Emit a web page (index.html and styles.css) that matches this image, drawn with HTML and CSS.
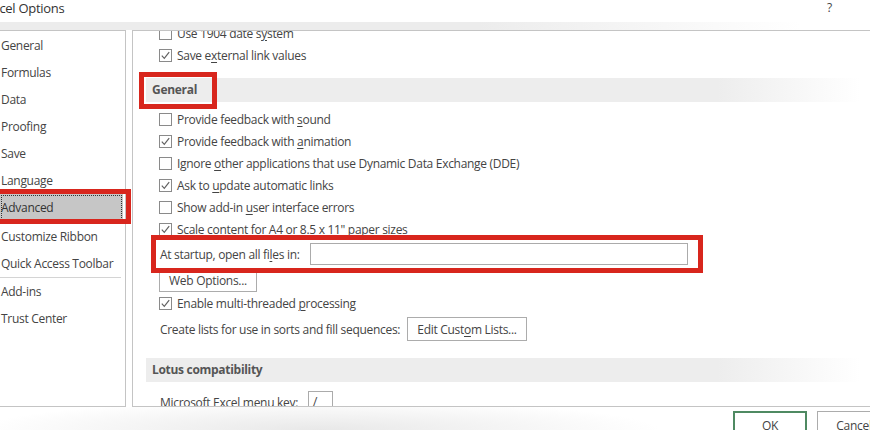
FILE: index.html
```html
<!DOCTYPE html>
<html>
<head>
<meta charset="utf-8">
<link rel="stylesheet" href="styles.css">
</head>
<body>
<div class="dialog">
  <header class="titlebar">
    <span class="title">Excel Options</span>
    <span class="help">?</span>
  </header>
  <div class="shade"></div>
  <div class="main">
    <nav class="nav">
      <div class="nav-item">General</div>
      <div class="nav-item">Formulas</div>
      <div class="nav-item">Data</div>
      <div class="nav-item">Proofing</div>
      <div class="nav-item">Save</div>
      <div class="nav-item">Language</div>
      <div class="nav-item active">Advanced</div>
      <div class="nav-item">Customize Ribbon</div>
      <div class="nav-item">Quick Access Toolbar</div>
      <div class="nav-sep"></div>
      <div class="nav-item">Add-ins</div>
      <div class="nav-item">Trust Center</div>
    </nav>
    <section class="content">
      <div class="inner">
        <div class="row"><svg class="cb" viewBox="0 0 13 13"><rect x="0.5" y="0.5" width="12" height="12"/></svg><span>Use 1904 date s<u>y</u>stem</span></div>
        <div class="row"><svg class="cb" viewBox="0 0 13 13"><rect x="0.5" y="0.5" width="12" height="12"/><path d="M2.8 6.6 L5.3 9.3 L10.2 3.2"/></svg><span>Save e<u>x</u>ternal link values</span></div>

        <div class="band">General</div>

        <div class="row first"><svg class="cb" viewBox="0 0 13 13"><rect x="0.5" y="0.5" width="12" height="12"/></svg><span>Provide feedback with <u>s</u>ound</span></div>
        <div class="row"><svg class="cb" viewBox="0 0 13 13"><rect x="0.5" y="0.5" width="12" height="12"/><path d="M2.8 6.6 L5.3 9.3 L10.2 3.2"/></svg><span>Provide feedback with <u>a</u>nimation</span></div>
        <div class="row"><svg class="cb" viewBox="0 0 13 13"><rect x="0.5" y="0.5" width="12" height="12"/></svg><span>Ignore <u>o</u>ther applications that use Dynamic Data Exchange (DDE)</span></div>
        <div class="row"><svg class="cb" viewBox="0 0 13 13"><rect x="0.5" y="0.5" width="12" height="12"/><path d="M2.8 6.6 L5.3 9.3 L10.2 3.2"/></svg><span>Ask to <u>u</u>pdate automatic links</span></div>
        <div class="row"><svg class="cb" viewBox="0 0 13 13"><rect x="0.5" y="0.5" width="12" height="12"/></svg><span>Show add-in <u>u</u>ser interface errors</span></div>
        <div class="row"><svg class="cb" viewBox="0 0 13 13"><rect x="0.5" y="0.5" width="12" height="12"/><path d="M2.8 6.6 L5.3 9.3 L10.2 3.2"/></svg><span>Scale content for A4 or 8.5 x 11" paper sizes</span></div>

        <div class="row plain startup"><span class="label-startup">At startup, open all fi<u>l</u>es in:</span><span class="field field-startup"></span></div>
        <div class="btn-row"><span class="btn btn-web">Web Options...</span></div>
        <div class="row"><svg class="cb" viewBox="0 0 13 13"><rect x="0.5" y="0.5" width="12" height="12"/><path d="M2.8 6.6 L5.3 9.3 L10.2 3.2"/></svg><span>Enable multi-threaded <u>p</u>rocessing</span></div>
        <div class="row plain lists"><span class="label-lists">Create lists for use in sorts and fill sequences:</span><span class="btn btn-lists">Edit Cust<u>o</u>m Lists...</span></div>

        <div class="band lotus">Lotus compatibility</div>

        <div class="row plain menukey"><span class="label-menu">Microsoft Excel menu key:</span><span class="field field-key">/</span></div>
      </div>
    </section>
  </div>
  <footer class="footer">
    <span class="fbtn ok">OK</span>
    <span class="fbtn cancel">Cancel</span>
  </footer>
</div>
<div class="mark mark-advanced"></div>
<div class="mark mark-general"></div>
<div class="mark mark-startup"></div>
</body>
</html>
```
FILE: styles.css
```css
* { box-sizing: border-box; }
html, body { margin: 0; padding: 0; }
body {
  width: 870px;
  height: 430px;
  overflow: hidden;
  background: #fff;
  font-family: "Open Sans", "Noto Sans", "Liberation Sans", sans-serif;
  font-size: 12px;
  letter-spacing: -0.3px;
  color: #444;
  position: relative;
}
u { text-decoration: underline; text-underline-offset: 2px; text-decoration-thickness: 1px; }

.dialog { width: 870px; height: 430px; display: flex; flex-direction: column; }

.titlebar {
  flex: 0 0 22px;
  display: flex;
  justify-content: space-between;
  align-items: flex-start;
}
.title { margin-left: -14px; line-height: 16px; font-size: 13px; color: #333; }
.help { margin-right: 38px; line-height: 16px; font-size: 12px; color: #444; }

.shade {
  flex: 0 0 8px;
  background: linear-gradient(to right, #ececec 0%, #ececec 55%, #ffffff 92%);
}

.main {
  flex: 0 0 377px;
  min-height: 0;
  overflow: hidden;
  display: flex;
  gap: 6px;
}

.nav {
  width: 126px;
  flex-shrink: 0;
  border-top: 1px solid #c4c4c4;
  border-bottom: 1px solid #c4c4c4;
  border-right: 1px solid #c4c4c4;
  padding-top: 1px;
}
.nav-item {
  height: 27px;
  line-height: 27px;
  padding-left: 1px;
  margin-right: 2px;
  white-space: nowrap;
  color: #444;
}
.nav-item.active {
  background: #c6c6c6;
  color: #333;
  outline: 1px dotted #333;
  outline-offset: -2px;
  margin-bottom: 2px;
}
.nav-sep { height: 1px; background: #d4d4d4; margin-right: 4px; }

.content {
  flex: 1;
  min-height: 0;
  border-top: 1px solid #c4c4c4;
  border-bottom: 1px solid #c4c4c4;
  border-left: 1px solid #c4c4c4;
  overflow: hidden;
}
.inner { margin-top: -9px; }

.row {
  height: 22px;
  display: flex;
  align-items: center;
  padding-left: 26px;
  gap: 5px;
  white-space: nowrap;
}
.row.plain { padding-left: 27px; gap: 0; }
.row.first { margin-top: 6px; }

.cb { width: 13px; height: 13px; flex-shrink: 0; }
.cb rect { fill: #fff; stroke: #8a8a8a; stroke-width: 1; }
.cb path { fill: none; stroke: #626262; stroke-width: 1.2; }

.band {
  margin-top: 12px;
  margin-left: 13px;
  width: 714px;
  height: 24px;
  line-height: 24px;
  padding-left: 6px;
  font-weight: 700;
  color: #555;
  background: linear-gradient(to right, #ededed 0%, #ededed 80%, #ffffff 100%);
}
.band.lotus { margin-top: 17px; }

.row.startup { margin-top: 3px; }
.label-startup { width: 150px; flex-shrink: 0; }
.field {
  display: block;
  height: 22px;
  border: 1px solid #ababab;
  background: #fff;
}
.field-startup { width: 378px; }

.btn-row { margin-top: 3px; padding-left: 26px; display: flex; }
.btn {
  display: flex;
  align-items: center;
  justify-content: center;
  height: 24px;
  border: 1px solid #acacac;
  background: #fff;
  color: #444;
  white-space: nowrap;
}
.btn-web { width: 98px; }

.row.lists { margin-top: 3px; height: 24px; }
.label-lists { width: 247px; flex-shrink: 0; }
.btn-lists { width: 120px; }

.row.menukey { margin-top: 9px; }
.label-menu { width: 148px; flex-shrink: 0; }
.field-key { width: 25px; padding-left: 4px; line-height: 20px; color: #444; }

.footer {
  flex: 0 0 23px;
  min-height: 0;
  display: flex;
  justify-content: flex-end;
  align-items: flex-start;
  gap: 10px;
  padding-top: 4px;
  background: radial-gradient(ellipse 340px 30px at 320px 100%, #e8e8e8 0%, rgba(255,255,255,0) 100%);
}
.fbtn {
  flex-shrink: 0;
  width: 74px;
  height: 26px;
  display: flex;
  align-items: center;
  justify-content: center;
  background: #fff;
  color: #444;
  padding-top: 2px;
}
.ok { border: 2px solid #4f8a62; }
.cancel { border: 1px solid #acacac; margin-right: -21px; }

.mark {
  position: absolute;
  border: 5px solid #d8261d;
  pointer-events: none;
}
.mark-advanced { left: -10px; top: 189px; width: 141px; height: 35px; }
.mark-general { left: 139px; top: 72px; width: 78px; height: 37px; }
.mark-startup { left: 151px; top: 235px; width: 552px; height: 38px; }
```
